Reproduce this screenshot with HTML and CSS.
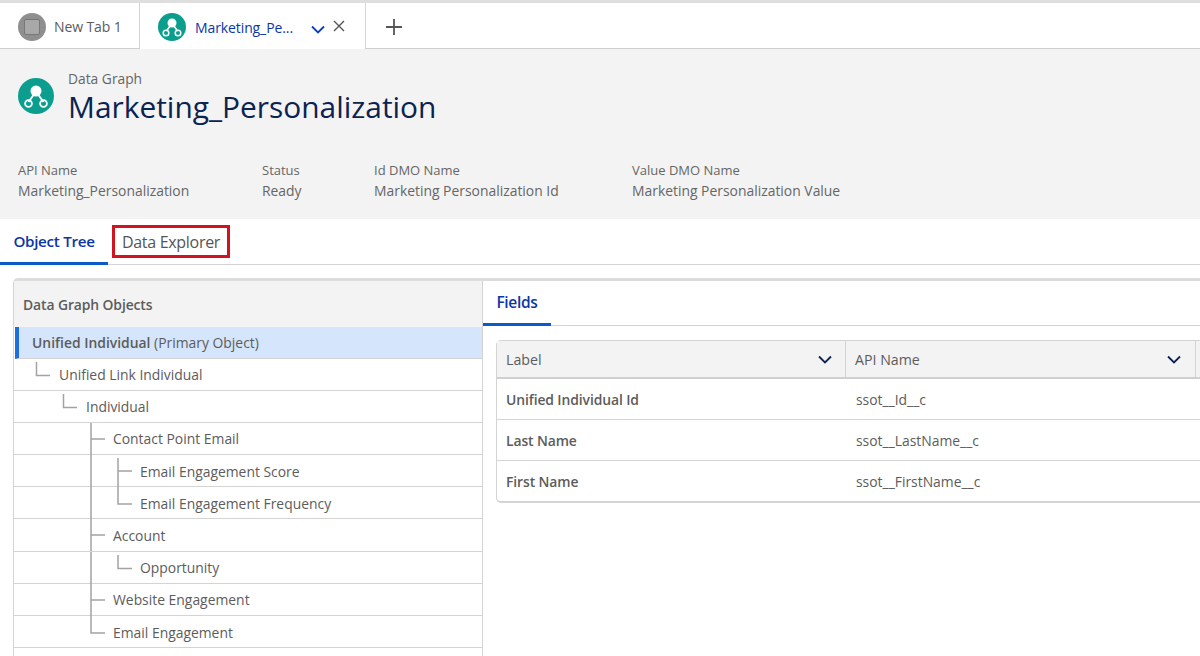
FILE: index.html
```html
<!DOCTYPE html>
<html lang="en">
<head>
<meta charset="utf-8">
<title>Marketing_Personalization</title>
<link rel="stylesheet" href="styles.css">
</head>
<body>
<div class="page">
  <nav class="tabbar">
    <div class="wtab wtab-idle">
      <span class="round round-gray"><span class="square"></span></span>
      <span class="wtab-label">New Tab 1</span>
    </div>
    <div class="wtab wtab-active">
      <svg class="round-svg" viewBox="0 0 28 28"><circle cx="14" cy="14" r="14" fill="#0b9e8f"/><circle cx="14" cy="10" r="4.5" fill="#fff"/><path d="M12 13l-3.500 5M16 13l3.500 5" stroke="#fff" stroke-width="1.500"/><circle cx="8" cy="20" r="2.800" fill="none" stroke="#fff" stroke-width="1.500"/><circle cx="20" cy="20" r="2.800" fill="none" stroke="#fff" stroke-width="1.500"/></svg>
      <span class="wtab-label wtab-label-blue">Marketing_Pe...</span>
      <svg class="tab-chev" viewBox="0 0 14 9"><path d="M1 1.500l6 6 6-6" fill="none" stroke="#0b3fb5" stroke-width="1.800"/></svg>
      <svg class="tab-close" viewBox="0 0 12 12"><path d="M1 1l10 10M11 1L1 11" stroke="#555" stroke-width="1.400"/></svg>
    </div>
    <div class="wtab-add"><svg viewBox="0 0 16 16" class="plus"><path d="M8 0v16M0 8h16" stroke="#555" stroke-width="1.800"/></svg></div>
  </nav>

  <header class="head">
    <div class="title-row">
      <svg class="title-icon" viewBox="0 0 36 36"><circle cx="18" cy="18" r="18" fill="#0b9e8f"/><circle cx="18" cy="13" r="5.500" fill="#fff"/><path d="M15.500 17l-5 7M20.500 17l5 7" stroke="#fff" stroke-width="1.800"/><circle cx="10.500" cy="25.500" r="3.400" fill="none" stroke="#fff" stroke-width="1.800"/><circle cx="25.500" cy="25.500" r="3.400" fill="none" stroke="#fff" stroke-width="1.800"/></svg>
      <div class="title-text">
        <div class="eyebrow">Data Graph</div>
        <h1 class="title">Marketing_Personalization</h1>
      </div>
    </div>
    <div class="meta">
      <div class="meta-item meta-api"><div class="meta-key">API Name</div><div class="meta-value">Marketing_Personalization</div></div>
      <div class="meta-item meta-status"><div class="meta-key">Status</div><div class="meta-value">Ready</div></div>
      <div class="meta-item meta-id"><div class="meta-key">Id DMO Name</div><div class="meta-value">Marketing Personalization Id</div></div>
      <div class="meta-item"><div class="meta-key">Value DMO Name</div><div class="meta-value">Marketing Personalization Value</div></div>
    </div>
  </header>

  <div class="subtabs">
    <div class="subtab subtab-active">Object Tree</div>
    <div class="subtab subtab-marked">Data Explorer</div>
  </div>

  <main class="work">
    <section class="tree">
      <div class="tree-head">Data Graph Objects</div>
      <div class="row row-primary"><b>Unified Individual</b>&nbsp;(Primary Object)</div>
      <div class="row">
        <svg class="guide g1" viewBox="0 0 44 32"><path d="M21.500 3v13.500H35"/></svg>Unified Link Individual</div>
      <div class="row">
        <svg class="guide g2" viewBox="0 0 71 32"><path d="M48.500 3v13.500H62"/></svg>Individual</div>
      <div class="row">
        <svg class="guide g3" viewBox="0 0 98 32"><path d="M76 0v32M76 16h14"/></svg>Contact Point Email</div>
      <div class="row">
        <svg class="guide g4" viewBox="0 0 125 32"><path d="M76 0v32M103 3v29M103 16h14"/></svg>Email Engagement Score</div>
      <div class="row">
        <svg class="guide g4" viewBox="0 0 125 32"><path d="M76 0v32M103 0v17h14"/></svg>Email Engagement Frequency</div>
      <div class="row">
        <svg class="guide g3" viewBox="0 0 98 32"><path d="M76 0v32M76 16h14"/></svg>Account</div>
      <div class="row">
        <svg class="guide g4" viewBox="0 0 125 32"><path d="M76 0v32M103 3v13.500h14"/></svg>Opportunity</div>
      <div class="row">
        <svg class="guide g3" viewBox="0 0 98 32"><path d="M76 0v32M76 16h14"/></svg>Website Engagement</div>
      <div class="row">
        <svg class="guide g3" viewBox="0 0 98 32"><path d="M76 0v17h14"/></svg>Email Engagement</div>
    </section>

    <section class="detail">
      <div class="detail-tabs"><div class="detail-tab">Fields</div></div>
      <div class="table">
        <div class="thead">
          <div class="th th-label">Label<svg class="th-chev" viewBox="0 0 14 9"><path d="M1 1.500l6 6 6-6"/></svg></div>
          <div class="th th-api">API Name<svg class="th-chev" viewBox="0 0 14 9"><path d="M1 1.500l6 6 6-6"/></svg></div>
        </div>
        <div class="tr"><div class="td-label">Unified Individual Id</div><div class="td-api">ssot__Id__c</div></div>
        <div class="tr"><div class="td-label">Last Name</div><div class="td-api">ssot__LastName__c</div></div>
        <div class="tr"><div class="td-label">First Name</div><div class="td-api">ssot__FirstName__c</div></div>
      </div>
    </section>
  </main>
</div>
</body>
</html>
```

FILE: styles.css
```css
* { box-sizing: border-box; }
html, body { margin: 0; padding: 0; }
body {
  width: 1200px;
  height: 656px;
  overflow: hidden;
  background: #fff;
  color: #5c5c5c;
  font-family: "Open Sans", "Noto Sans", sans-serif;
  font-size: 13.900px;
}
.page { width: 1200px; height: 656px; overflow: hidden; }

.tabbar {
  display: flex;
  height: 49px;
  border-top: 3px solid #dedede;
  border-bottom: 1px solid #cfcfcf;
}
.wtab { display: flex; align-items: center; height: 45px; padding-top: 2px; }
.wtab-idle { width: 140px; padding-left: 18px; gap: 8px; border-right: 1px solid #d4d4d4; }
.wtab-active {
  width: 226px;
  padding-left: 18px;
  border-right: 1px solid #d4d4d4;
  height: 46px;
  background: #fff;
  position: relative;
  z-index: 1;
}
.round { width: 28px; height: 28px; border-radius: 50%; display: flex; align-items: center; justify-content: center; flex: none; }
.round-gray { background: #8f8f8f; }
.square { width: 16px; height: 16px; background: #a8a8a8; border: 1px solid #777; border-radius: 2px; }
.round-svg { width: 28px; height: 28px; flex: none; }
.wtab-label { font-size: 14px; letter-spacing: -0.1px; }
.wtab-label-blue { color: #0b36a8; margin-left: 9px; width: 111px; white-space: nowrap; }
.tab-chev { width: 14px; height: 9px; margin-left: 5px; margin-top: 4px; }
.tab-close { width: 12px; height: 12px; margin-left: 8px; margin-top: -2px; }
.wtab-add { display: flex; align-items: center; padding-left: 20px; padding-top: 2px; }
.plus { width: 16px; height: 16px; }

.head { height: 170px; background: #f3f3f3; padding: 20px 18px 0; }
.title-row { display: flex; gap: 14px; }
.title-icon { width: 36px; height: 36px; margin-top: 9px; flex: none; }
.eyebrow { font-size: 13.800px; line-height: 20px; color: #666; }
.title { margin: 0; font-size: 29.900px; line-height: 36px; font-weight: 400; color: #0b2350; }
.meta { display: flex; margin-top: 34px; line-height: 21px; color: #666; }
.meta-item { flex: none; }
.meta-key { font-size: 13px; padding-top: 1px; margin-bottom: -1px; }
.meta-api { width: 244px; }
.meta-status { width: 112px; }
.meta-id { width: 258px; }

.subtabs { display: flex; height: 46px; border-bottom: 1px solid #d4d4d4; align-items: stretch; }
.subtab { font-size: 16px; display: flex; align-items: center; }
.subtab-active {
  width: 108px;
  justify-content: center;
  color: #0b36a8;
  font-size: 15.200px;
  font-weight: 600;
  border-bottom: 3px solid #0b5cc9;
  height: 46px;
  letter-spacing: -0.3px;
}
.subtab-marked {
  margin: 6px 0 0 4px;
  height: 33px;
  width: 118px;
  justify-content: center;
  border: 3px solid #d3121f;
  color: #555;
  font-weight: 500;
  letter-spacing: -0.3px;
}

.work {
  display: flex;
  margin: 13px 0 0 13px;
  border-top: 3px solid #dcdcdc;
  border-left: 1px solid #d4d4d4;
  border-top-left-radius: 5px;
  height: 379px;
}
.tree { width: 469px; flex: none; border-right: 1px solid #d4d4d4; }
.tree-head {
  height: 46px;
  background: #f3f3f3;
  padding-left: 9px;
  display: flex;
  align-items: center;
  font-weight: 600;
  letter-spacing: -0.1px;
}
.row {
  display: flex;
  align-items: center;
  height: 32.200px;
  padding-top: 1px;
  border-bottom: 1px solid #d4d4d4;
  white-space: nowrap;
}
.row-primary {
  background: #d5e5fb;
  border-left: 4px solid #1b6fe0;
  margin-left: 1px;
  padding-left: 13px;
  height: 31.500px;
}
.row-primary b { font-weight: 600; }
.guide { height: 32px; flex: none; align-self: flex-start; margin: -1px 0 0 1px; }
.guide path { fill: none; stroke: #a3a3a3; stroke-width: 1.500; }
.g1 { width: 44px; }
.g2 { width: 71px; }
.g3 { width: 98px; }
.g4 { width: 125px; }

.detail { flex: 1; min-width: 0; }
.detail-tabs { height: 45px; border-bottom: 1px solid #d4d4d4; }
.detail-tab {
  width: 68px;
  height: 45px;
  display: flex;
  align-items: center;
  justify-content: center;
  font-size: 15.500px;
  font-weight: 600;
  color: #0b36a8;
  border-bottom: 3px solid #0b5cc9;
  letter-spacing: -0.3px;
}
.table {
  margin: 14px 0 0 13px;
  width: 711px;
  border: 1px solid #d4d4d4;
  border-right: 0;
  border-bottom-width: 2px;
  border-radius: 5px 0 0 5px;
}
.thead { display: flex; height: 38px; background: #f3f3f3; border-bottom: 2px solid #cfcfcf; }
.th { display: flex; align-items: center; justify-content: space-between; padding: 0 13px 0 9px; font-weight: 500; font-size: 14.200px; }
.th-label { width: 349px; border-right: 1px solid #d4d4d4; }
.th-api { width: 350px; border-right: 1px solid #d4d4d4; padding-right: 14px; }
.th-chev { width: 14px; height: 9px; }
.th-chev path { fill: none; stroke: #0b2350; stroke-width: 1.800; }
.tr { display: flex; align-items: center; height: 41px; border-bottom: 1px solid #d4d4d4; }
.tr:last-child { border-bottom: 0; height: 40px; }
.td-label { width: 349px; padding-left: 9px; font-weight: 600; letter-spacing: -0.1px; }
.td-api { padding-left: 10px; }
```
